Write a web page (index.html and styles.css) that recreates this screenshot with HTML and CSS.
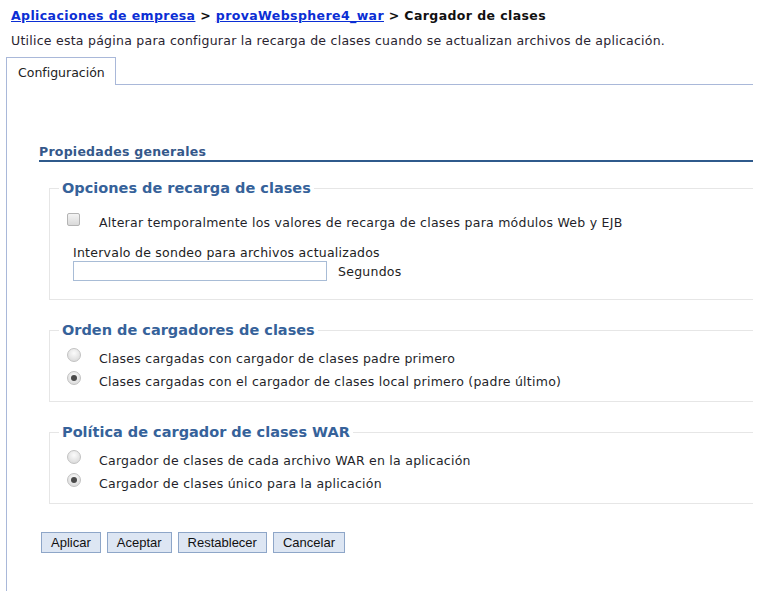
FILE: index.html
```html
<!DOCTYPE html>
<html lang="es">
<head>
<meta charset="utf-8">
<title>Cargador de clases</title>
<link rel="stylesheet" href="styles.css">
</head>
<body>
<div class="page">
  <div class="crumbs">
    <a href="#">Aplicaciones de empresa</a> &gt; <a href="#">provaWebsphere4_war</a> &gt; Cargador de clases
  </div>
  <p class="desc">Utilice esta página para configurar la recarga de clases cuando se actualizan archivos de aplicación.</p>
  <div class="tabs">
    <div class="tab">Configuración</div>
    <div class="tab-rest"></div>
  </div>
  <div class="panel">
    <h2 class="section">Propiedades generales</h2>

    <fieldset class="group g1">
      <legend>Opciones de recarga de clases</legend>
      <label class="opt check"><span class="box"></span><span class="lbl">Alterar temporalmente los valores de recarga de clases para módulos Web y EJB</span></label>
      <div class="field">
        <div class="flabel">Intervalo de sondeo para archivos actualizados</div>
        <div class="frow"><span class="input"></span><span class="unit">Segundos</span></div>
      </div>
    </fieldset>

    <fieldset class="group g2">
      <legend>Orden de cargadores de clases</legend>
      <label class="opt first"><span class="radio"></span><span class="lbl">Clases cargadas con cargador de clases padre primero</span></label>
      <label class="opt"><span class="radio on"></span><span class="lbl">Clases cargadas con el cargador de clases local primero (padre último)</span></label>
    </fieldset>

    <fieldset class="group g3">
      <legend>Política de cargador de clases WAR</legend>
      <label class="opt first"><span class="radio"></span><span class="lbl">Cargador de clases de cada archivo WAR en la aplicación</span></label>
      <label class="opt"><span class="radio on"></span><span class="lbl">Cargador de clases único para la aplicación</span></label>
    </fieldset>

    <div class="buttons">
      <button class="btn">Aplicar</button>
      <button class="btn">Aceptar</button>
      <button class="btn">Restablecer</button>
      <button class="btn">Cancelar</button>
    </div>
  </div>
</div>
</body>
</html>
```

FILE: styles.css
```css
html, body {
  margin: 0;
  padding: 0;
  background: #fff;
}
body {
  font-family: "DejaVu Sans", Verdana, sans-serif;
  font-size: 12.5px;
  line-height: 16px;
  letter-spacing: 0.25px;
  color: #222;
}
.page {
  width: 753px;
  height: 591px;
  overflow: hidden;
  display: flex;
  flex-direction: column;
}
.crumbs {
  padding: 8px 0 0 11px;
  font-weight: bold;
  font-size: 12.5px;
  letter-spacing: 0.4px;
  line-height: 16px;
  color: #111;
  white-space: nowrap;
}
.crumbs a {
  color: #0b2ed4;
  text-decoration: underline;
}
.desc {
  margin: 9px 0 0 11px;
  line-height: 16px;
  color: #2a2430;
  white-space: nowrap;
}
.tabs {
  display: flex;
  margin: 8px 0 0 6px;
  height: 28px;
}
.tab {
  width: 97px;
  padding: 7px 0 0 11px;
  border: 1px solid #a9b8d9;
  border-bottom: none;
  color: #222;
  letter-spacing: 0;
  background: #fff;
}
.tab-rest {
  flex: 1;
  border-bottom: 1px solid #a9b8d9;
}
.panel {
  flex: 1;
  margin-left: 6px;
  border-left: 1px solid #a9b8d9;
  padding: 59px 0 0 32px;
}
.section {
  margin: 0;
  font-size: 12.5px;
  font-weight: bold;
  color: #35588a;
  line-height: 16px;
  padding: 0;
  border-bottom: 2px solid #2f5a8c;
  white-space: nowrap;
}
.group {
  margin: 17px 0 0 10px;
  padding: 0;
  border: 1px solid #e6e6e6;
  border-right: none;
  min-width: 0;
}
.group legend {
  padding: 0 3px;
  margin-left: 9px;
  font-size: 14.5px;
  font-weight: bold;
  color: #36629a;
  line-height: 18px;
  letter-spacing: 0;
}
.g1 { padding-bottom: 18px; }
.g2 { margin-top: 21px; padding-bottom: 8px; }
.g3 { margin-top: 21px; padding-bottom: 8px; }
.opt {
  display: flex;
  align-items: flex-start;
  margin-left: 17px;
  height: 23px;
  line-height: 23px;
  white-space: nowrap;
}
.opt.first { margin-top: 8px; }
.check {
  margin-top: 18px;
  height: 16px;
  line-height: 16px;
}
.box {
  flex: none;
  width: 11px;
  height: 11px;
  margin-top: -2px;
  border: 1px solid #b4b4b4;
  border-radius: 2px;
  background: linear-gradient(#f4f4f4, #d9d9d9);
  margin-right: 19px;
}
.radio {
  flex: none;
  width: 12px;
  height: 12px;
  margin-top: 1px;
  border: 1px solid #c2c2c2;
  border-radius: 50%;
  background: radial-gradient(circle at 50% 35%, #fbfbfb, #d4d4d4);
  margin-right: 18px;
  position: relative;
}
.radio.on::after {
  content: "";
  position: absolute;
  left: 3px;
  top: 3px;
  width: 6px;
  height: 6px;
  border-radius: 50%;
  background: #4a4a4a;
}
.lbl { color: #241f2a; }
.field {
  margin: 14px 0 0 23px;
}
.flabel {
  line-height: 16px;
  white-space: nowrap;
}
.frow {
  display: flex;
  align-items: center;
}
.input {
  box-sizing: border-box;
  width: 254px;
  height: 20px;
  border: 1px solid #a8bcd6;
  background: #fff;
}
.unit {
  margin-left: 11px;
  line-height: 16px;
  padding-top: 1px;
}
.buttons {
  display: flex;
  gap: 6px;
  margin: 28px 0 0 2px;
}
.btn {
  box-sizing: border-box;
  font-family: "Liberation Sans", Arial, sans-serif;
  font-size: 13px;
  letter-spacing: 0;
  color: #111;
  height: 21px;
  padding: 0 9px;
  border: 1px solid #8ea6c8;
  background: #dde6f3;
  border-radius: 0;
}
```
